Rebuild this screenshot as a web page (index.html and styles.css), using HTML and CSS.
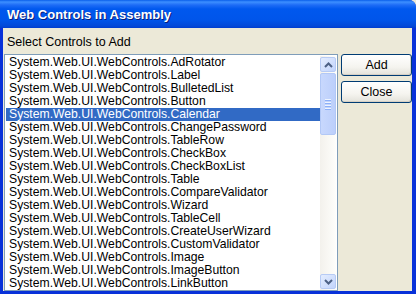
FILE: index.html
```html
<!DOCTYPE html>
<html>
<head>
<meta charset="utf-8">
<link rel="stylesheet" href="styles.css">
</head>
<body>
<div class="window">
  <div class="titlebar"><span class="title">Web Controls in Assembly</span></div>
  <div class="client">
    <div class="label">Select Controls to Add</div>
    <div class="main">
      <div class="listbox">
        <ul class="items">
          <li>System.Web.UI.WebControls.AdRotator</li>
          <li>System.Web.UI.WebControls.Label</li>
          <li>System.Web.UI.WebControls.BulletedList</li>
          <li>System.Web.UI.WebControls.Button</li>
          <li class="selected">System.Web.UI.WebControls.Calendar</li>
          <li>System.Web.UI.WebControls.ChangePassword</li>
          <li>System.Web.UI.WebControls.TableRow</li>
          <li>System.Web.UI.WebControls.CheckBox</li>
          <li>System.Web.UI.WebControls.CheckBoxList</li>
          <li>System.Web.UI.WebControls.Table</li>
          <li>System.Web.UI.WebControls.CompareValidator</li>
          <li>System.Web.UI.WebControls.Wizard</li>
          <li>System.Web.UI.WebControls.TableCell</li>
          <li>System.Web.UI.WebControls.CreateUserWizard</li>
          <li>System.Web.UI.WebControls.CustomValidator</li>
          <li>System.Web.UI.WebControls.Image</li>
          <li>System.Web.UI.WebControls.ImageButton</li>
          <li>System.Web.UI.WebControls.LinkButton</li>
        </ul>
        <div class="scrollbar">
          <div class="sbtn">
            <svg width="9" height="6" viewBox="0 0 9 6"><path d="M1 5 L4.5 1.5 L8 5" fill="none" stroke="#4D6185" stroke-width="2"/></svg>
          </div>
          <div class="thumb">
            <span class="grip"></span><span class="grip"></span><span class="grip"></span><span class="grip"></span>
          </div>
          <div class="track"></div>
          <div class="sbtn">
            <svg width="9" height="6" viewBox="0 0 9 6"><path d="M1 1 L4.5 4.5 L8 1" fill="none" stroke="#4D6185" stroke-width="2"/></svg>
          </div>
        </div>
      </div>
      <div class="buttons">
        <button class="btn">Add</button>
        <button class="btn">Close</button>
      </div>
    </div>
  </div>
</div>
</body>
</html>
```
FILE: styles.css
```css
html, body {
  margin: 0;
  padding: 0;
  width: 416px;
  height: 294px;
  overflow: hidden;
  background: #ECE9D8;
}
.window {
  width: 416px;
  height: 294px;
  box-sizing: border-box;
  display: flex;
  flex-direction: column;
  background: #0831D9;
  border-top-right-radius: 7px;
  overflow: hidden;
}
.titlebar {
  height: 28px;
  flex: none;
  background: linear-gradient(to bottom, #0A5FEA 0px, #3D8FFF 2px, #1E6CF6 5px, #0058EE 9px, #0055EA 20px, #0349D8 26px, #003DD0 28px);
  display: flex;
  align-items: center;
  padding-left: 7px;
}
.title {
  font-family: "Liberation Sans", sans-serif;
  font-weight: bold;
  font-size: 13px;
  color: #fff;
  text-shadow: 1px 1px 0 #0A1E7A;
}
.client {
  flex: 1;
  margin: 0 4px 3px 3px;
  background: #ECE9D8;
  display: flex;
  flex-direction: column;
  min-height: 0;
}
.label {
  font-family: "Liberation Sans", sans-serif;
  font-size: 12.5px;
  color: #000;
  padding: 7px 0 0 4px;
  height: 19px;
}
.main {
  flex: 1;
  display: flex;
  min-height: 0;
  padding-left: 1px;
}
.listbox {
  width: 334px;
  box-sizing: border-box;
  border: 1px solid #7F9DB9;
  background: #fff;
  display: flex;
  padding: 1px 1px 0 1px;
  height: 237px;
}
.items {
  list-style: none;
  margin: 0;
  padding: 0;
  flex: 1;
  overflow: hidden;
}
.items li {
  font-family: "Liberation Sans", sans-serif;
  font-size: 12.2px;
  line-height: 13px;
  height: 13px;
  padding-left: 3px;
  color: #000;
  white-space: nowrap;
}
.items li.selected {
  background: #316AC5;
  color: #fff;
}
.scrollbar {
  width: 16px;
  flex: none;
  display: flex;
  flex-direction: column;
  padding: 1px 0 1px 0;
  background: linear-gradient(to right, #F3F1EC, #FEFEFB);
}
.sbtn {
  height: 15px;
  flex: none;
  margin: 0 0 1px 0;
  box-sizing: border-box;
  border: 1px solid #B7CBF5;
  border-radius: 2px;
  background: linear-gradient(to bottom right, #E4EDFE, #C2D4FC);
  display: flex;
  align-items: center;
  justify-content: center;
}
.sbtn:last-child { margin: 1px 0 0 0; }
.thumb {
  height: 62px;
  flex: none;
  box-sizing: border-box;
  border: 1px solid #B2C8F6;
  border-radius: 2px;
  background: linear-gradient(to right, #C8D8FD, #BCCFFB);
  display: flex;
  flex-direction: column;
  align-items: center;
  justify-content: center;
  gap: 1px;
}
.grip {
  width: 6px;
  height: 1px;
  background: #EEF4FE;
  border-bottom: 1px solid #8CB0F8;
}
.track {
  flex: 1;
}
.buttons {
  display: flex;
  flex-direction: column;
  gap: 5px;
  padding-left: 3px;
}
.btn {
  width: 71px;
  height: 22px;
  box-sizing: border-box;
  border: 1px solid #003C74;
  border-radius: 3px;
  background: linear-gradient(to bottom, #FFFFFF 0%, #F5F4EF 60%, #E3E2DA 100%);
  font-family: "Liberation Sans", sans-serif;
  font-size: 12.5px;
  color: #000;
  padding: 0;
  box-shadow: inset -1px -1px 0 #D6D0C5;
}
```
